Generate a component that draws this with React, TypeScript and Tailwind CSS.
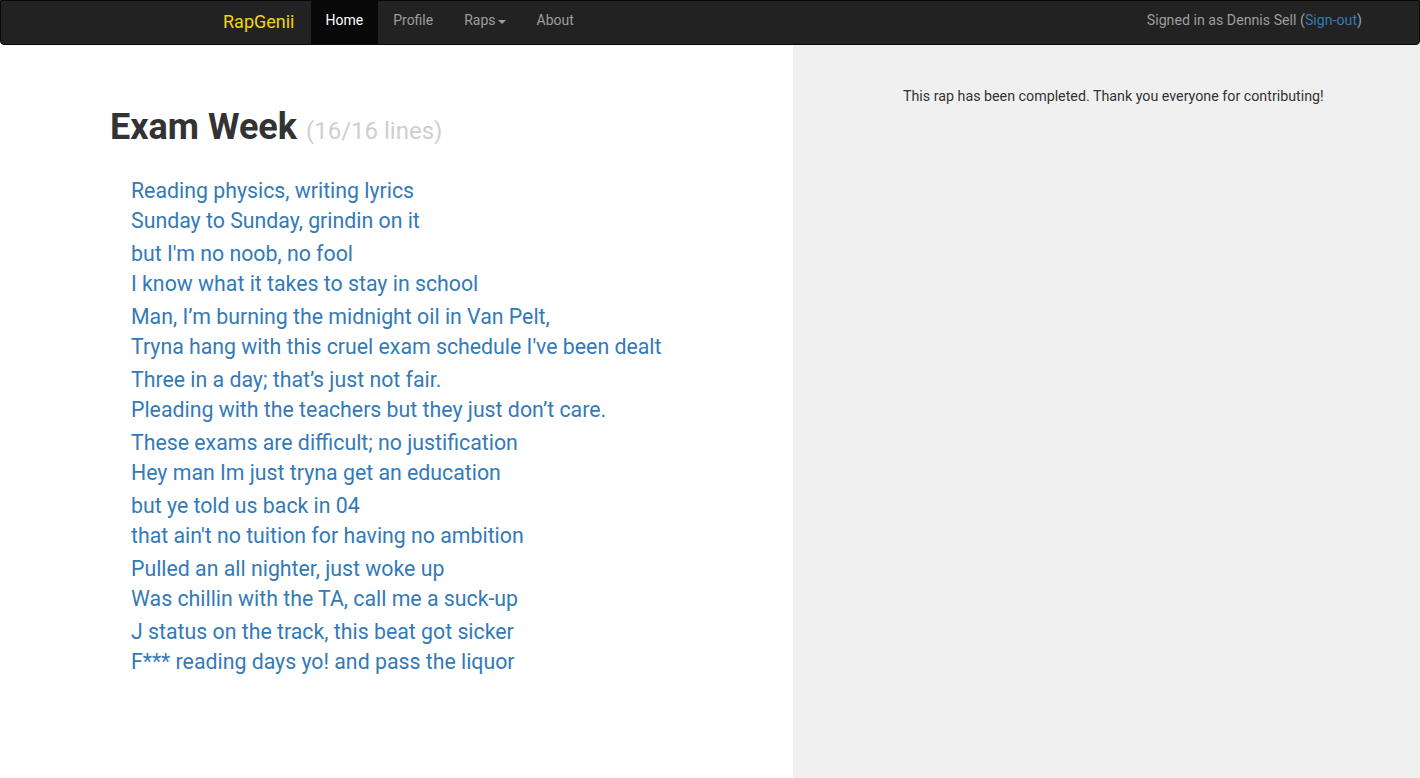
const lyrics: string[][] = [
  ["Reading physics, writing lyrics", "Sunday to Sunday, grindin on it"],
  ["but I'm no noob, no fool", "I know what it takes to stay in school"],
  ["Man, I’m burning the midnight oil in Van Pelt,", "Tryna hang with this cruel exam schedule I've been dealt"],
  ["Three in a day; that’s just not fair.", "Pleading with the teachers but they just don’t care."],
  ["These exams are difficult; no justification", "Hey man Im just tryna get an education"],
  ["but ye told us back in 04", "that ain't no tuition for having no ambition"],
  ["Pulled an all nighter, just woke up", "Was chillin with the TA, call me a suck-up"],
  ["J status on the track, this beat got sicker", "F*** reading days yo! and pass the liquor"],
];

function Navbar() {
  return (
    <nav className="h-[45px] bg-[#222] border border-[#080808] rounded-b-[4px] flex items-stretch pl-[207px] pr-[57px] text-[14px]">
      <a className="flex items-center pb-[3px] pl-[15px] pr-[16px] text-[18px] text-[#f2d40c]">RapGenii</a>
      <ul className="flex items-stretch">
        <li className="flex items-center pb-[4px] px-[15px] bg-[#080808] text-white">Home</li>
        <li className="flex items-center pb-[4px] px-[15px] text-[#9d9d9d]">Profile</li>
        <li className="flex items-center pb-[4px] pl-[16px] pr-[15px] text-[#9d9d9d]">
          Raps
          <span className="ml-[2px] mt-[2px] border-x-[4px] border-t-[4px] border-x-transparent border-t-[#9d9d9d]" />
        </li>
        <li className="flex items-center pb-[4px] pl-[16px] pr-[15px] text-[#9d9d9d]">About</li>
      </ul>
      <div className="ml-auto flex items-center pb-[4px] text-[14.2px] text-[#9d9d9d]">
        Signed in as Dennis Sell (<a className="text-[#337ab7]">Sign-out</a>)
      </div>
    </nav>
  );
}

export default function App() {
  return (
    <div className="min-h-[778px] bg-white text-[#333]" style={{ fontFamily: "Roboto, 'Liberation Sans', sans-serif" }}>
      <Navbar />
      <div className="flex min-h-[733px]">
        <div className="w-[793px] pl-[110px] pt-[60px]">
          <h1 className="text-[36px] font-bold leading-[44px] text-[#333]">
            Exam Week <small className="text-[24px] font-normal text-[#cfcfcf]">(16/16 lines)</small>
          </h1>
          <div className="mt-[23px] pl-[21px] text-[21.3px] text-[#337ab7]">
            {lyrics.map((pair, i) => (
              <div key={i} className="mb-[3px]">
                {pair.map((line, j) => (
                  <div key={j} className="leading-[30px]">{line}</div>
                ))}
              </div>
            ))}
          </div>
        </div>
        <div className="flex-1 bg-[#f0f0f0] pt-[41px] pl-[110px] text-[14.25px] text-[#333]">
          <p className="leading-[20px]">This rap has been completed. Thank you everyone for contributing!</p>
        </div>
      </div>
    </div>
  );
}
